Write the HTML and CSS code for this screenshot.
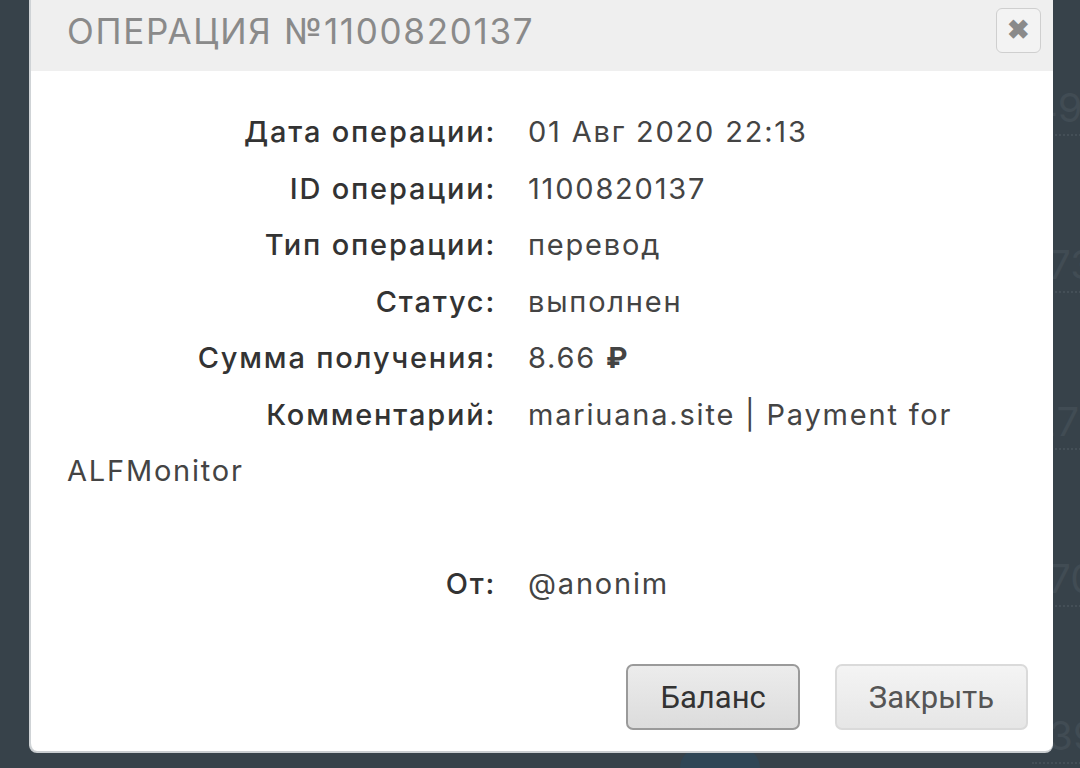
FILE: index.html
```html
<!DOCTYPE html>
<html>
<head>
  <title>Операция №1100820137</title>
  <link rel="stylesheet" href="styles.css">
</head>
<body>
  <div class="backdrop">
    <div class="stat">498</div>
    <div class="stat">173</div>
    <div class="stat">272</div>
    <div class="stat">170</div>
    <div class="stat">139</div>
  </div>
  <div class="blob"></div>

  <div class="modal">
    <div class="modal-header">
      <h1>ОПЕРАЦИЯ №1100820137</h1>
      <button type="button" class="close" title="Закрыть">&#10006;</button>
    </div>
    <div class="modal-body">
      <div class="row"><span class="label">Дата операции:</span><span class="value">01 Авг 2020 22:13</span></div>
      <div class="row"><span class="label">ID операции:</span><span class="value">1100820137</span></div>
      <div class="row"><span class="label">Тип операции:</span><span class="value">перевод</span></div>
      <div class="row"><span class="label">Статус:</span><span class="value">выполнен</span></div>
      <div class="row"><span class="label">Сумма получения:</span><span class="value">8.66 <b class="rub">₽</b></span></div>
      <div class="row"><span class="label">Комментарий:</span><span class="value">mariuana.site | Payment for ALFMonitor</span></div>
      <div class="row empty"></div>
      <div class="row"><span class="label">От:</span><span class="value">@anonim</span></div>
    </div>
    <div class="modal-footer">
      <button type="button" class="btn btn-primary">Баланс</button>
      <button type="button" class="btn">Закрыть</button>
    </div>
  </div>
</body>
</html>
```

FILE: styles.css
```css
html, body {
  height: 768px;
  overflow: hidden;
  }
body {
  margin: 0;
  background: #37424a;
  font-family: Inter, "Noto Sans", sans-serif;
  position: relative;
  }
.backdrop {
  margin-left: 1032px;
  padding-top: 86px;
  height: 768px;
  box-sizing: border-box;
  overflow: hidden;
  }
.stat {
  height: 157px;
  font-size: 40px;
  color: #414c54;
  line-height: 44px;
  }
.stat::after {
  content: "";
  display: block;
  width: 60px;
  border-bottom: 2px dotted #444f57;
  margin-top: 4px;
  }
.blob {
  position: absolute;
  left: 680px;
  top: 748px;
  width: 80px;
  height: 20px;
  border-radius: 40px 40px 0 0;
  background: #2f4656;
  }
.modal {
  position: absolute;
  left: 29px;
  top: 0;
  width: 1024px;
  height: 751px;
  background: #fff;
  border-left: 2px solid #cfd3d6;
  box-sizing: border-box;
  border-radius: 0 0 8px 8px;
  box-shadow: 0 2px 0 #c9cdd0;
  display: flex;
  flex-direction: column;
  }
.modal-header {
  height: 71px;
  background: #efefef;
  display: flex;
  align-items: center;
  justify-content: space-between;
  padding: 0 12px 0 36px;
  }
.modal-header h1 {
  margin: -10px 0 0;
  font-size: 35px;
  font-weight: 400;
  letter-spacing: 1.7px;
  color: #8a8a8a;
  }
.close {
  width: 45px;
  height: 45px;
  margin-top: -10px;
  border: 1px solid #cfcfcf;
  border-radius: 6px;
  background: #f3f3f3;
  color: #8a8a8a;
  font-size: 27px;
  line-height: 1;
  font-weight: bold;
  padding: 0;
  }
.modal-body {
  padding: 33px 38px 0 36px;
  font-size: 29px;
  letter-spacing: 1.8px;
  color: #444;
  flex: 1;
  }
.row {
  line-height: 56.5px;
  }
.empty {
  height: 56.5px;
  }
.label {
  display: inline-block;
  width: 429px;
  margin-right: 32px;
  text-align: right;
  font-weight: 500;
  color: #333;
  }
.value {
  font-weight: 400;
  }
.rub {
  font-weight: 700;
  }
.modal-footer {
  display: flex;
  justify-content: flex-end;
  gap: 35px;
  padding: 0 25px 21px 0;
  }
.btn {
  height: 66px;
  padding: 0 32px;
  font-family: Roboto, "Liberation Sans", sans-serif;
  font-size: 31px;
  color: #555;
  background: linear-gradient(#f4f4f4, #e6e6e6);
  border: 2px solid #dadada;
  border-radius: 7px;
  }
.btn-primary {
  color: #333;
  border-color: #9a9a9a;
  background: linear-gradient(#ececec, #dcdcdc);
  }
```
